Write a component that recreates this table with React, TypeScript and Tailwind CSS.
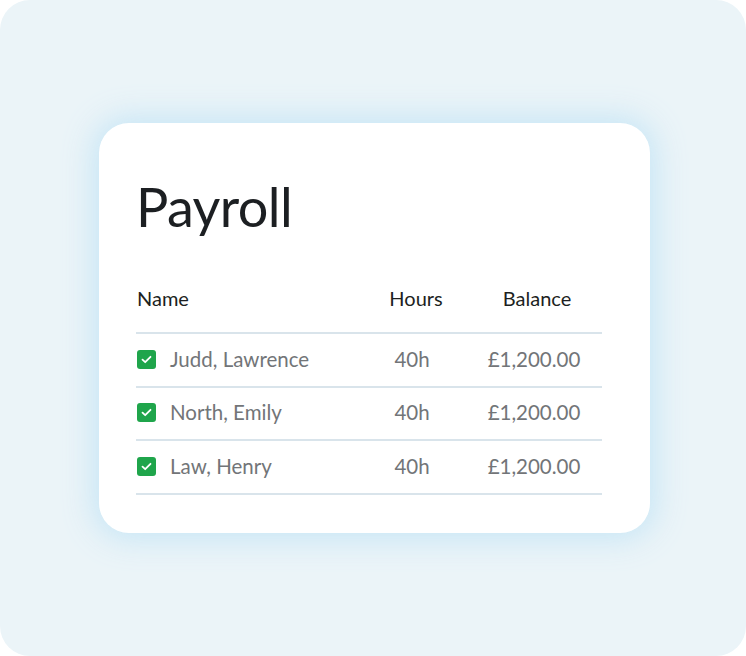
import React from 'react';

const rows = [
  { name: 'Judd, Lawrence', hours: '40h', balance: '£1,200.00' },
  { name: 'North, Emily', hours: '40h', balance: '£1,200.00' },
  { name: 'Law, Henry', hours: '40h', balance: '£1,200.00' },
];

const Check: React.FC = () => (
  <span className="w-[19px] h-[19px] rounded-[3px] bg-[#1fa54b] flex items-center justify-center shrink-0">
    <svg width="11" height="9" viewBox="0 0 11 9" fill="none">
      <path d="M1.5 4.6 L4.2 7.2 L9.5 1.8" stroke="white" strokeWidth="1.8" strokeLinecap="round" strokeLinejoin="round" />
    </svg>
  </span>
);

export default function App() {
  return (
    <div className="w-[746px] h-[656px] bg-white font-['Lato',sans-serif]">
      <div className="w-full h-full rounded-[30px] bg-[#ebf4f8] pt-[123px] pl-[99px]">
        <div className="w-[551px] h-[410px] bg-white rounded-[30px] shadow-[0_0_30px_6px_rgba(190,226,245,0.8)] pt-[57px] pl-[37px] pr-[48px]">
          <h1 className="text-[54px] leading-none text-[#1c1f22] tracking-[-0.6px] h-[93px]">Payroll</h1>
          <div className="grid grid-cols-[230px_100px_1fr] items-start h-[61px] pt-[13px] border-b-2 border-[#d9e4eb] text-[20px] leading-[24px] text-[#1c1f22]">
            <span className="pl-[1px]">Name</span>
            <span className="text-center">Hours</span>
            <span className="text-center pl-[6px]">Balance</span>
          </div>
          {rows.map((r) => (
            <div key={r.name} className="grid grid-cols-[230px_100px_1fr] items-center h-[53.5px] pb-[1px] border-b-2 border-[#d9e4eb] text-[20.5px] text-[#727578]">
              <div className="flex items-center gap-[14px] pl-[1px]">
                <Check />
                <span>{r.name}</span>
              </div>
              <span className="text-center pr-[8px]">{r.hours}</span>
              <span className="text-center">{r.balance}</span>
            </div>
          ))}
        </div>
      </div>
    </div>
  );
}
